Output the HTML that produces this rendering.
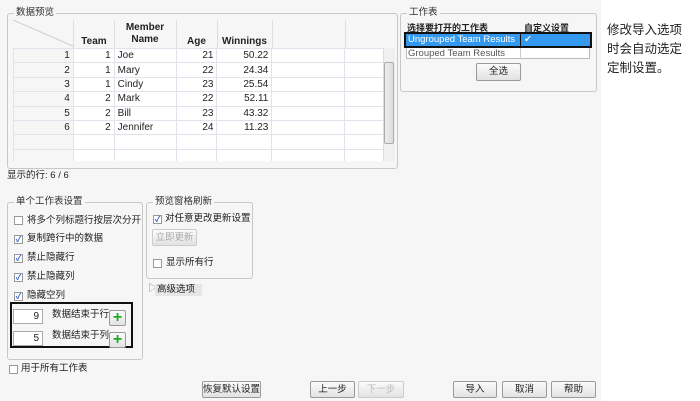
<!DOCTYPE html>
<html><head><meta charset="utf-8"><style>
*{box-sizing:border-box;margin:0;padding:0}
body{width:700px;height:401px;background:#fff;position:relative;overflow:hidden;font-family:"Liberation Sans","Noto Sans CJK SC",sans-serif;font-size:10px;color:#222}
.a{position:absolute}
#dlg{left:0;top:0;width:601px;height:401px;background:#f6f6f6}
.grp{position:absolute;border:1px solid #c8c8c8;border-radius:3px}
.gl{position:absolute;top:-7px;left:6px;background:#f6f6f6;padding:0 2px;font-size:9.5px;color:#333;line-height:12px}
.cb{position:absolute;width:9px;height:9px;border:1px solid #999;background:#fff;font-size:8px;line-height:8px;text-align:center;color:#2a5bd0;font-weight:bold}
.lb{position:absolute;font-size:9.5px;line-height:12px;color:#222}
.btn{position:absolute;border:1px solid #9a9a9a;border-radius:2px;background:linear-gradient(#fbfbfb,#e2e2e2);font-size:9.5px;text-align:center;line-height:16px;color:#222}
table{border-collapse:collapse;font-size:10px}
td{border:1px solid #e2e2ec;height:14.4px;padding:0 3px;line-height:13px;white-space:nowrap}
.r{text-align:right}
</style></head><body>
<div id="dlg" class="a">
<div class="grp" style="left:7px;top:13px;width:391px;height:156px">
 <div class="gl">数据预览</div>
</div>
<svg class="a" style="left:13px;top:20px" width="60" height="28"><line x1="0" y1="0" x2="60" y2="26" stroke="#ccc"/></svg>
<div class="a" style="left:73px;top:20px;width:1px;height:141px;background:#ddd"></div>
<div class="a" style="left:114px;top:20px;width:1px;height:28px;background:#ddd"></div>
<div class="a" style="left:176px;top:20px;width:1px;height:28px;background:#ddd"></div>
<div class="a" style="left:217px;top:20px;width:1px;height:28px;background:#ddd"></div>
<div class="a" style="left:272px;top:20px;width:1px;height:28px;background:#ddd"></div>
<div class="a" style="left:345px;top:20px;width:1px;height:28px;background:#ddd"></div>
<div class="a" style="left:74px;top:22px;width:40px;text-align:center;font-weight:bold;font-size:10px;line-height:12px;padding-top:14px">Team</div>
<div class="a" style="left:114px;top:22px;width:62px;text-align:center;font-weight:bold;font-size:10px;line-height:12px">Member<br>Name</div>
<div class="a" style="left:176px;top:36px;width:41px;text-align:center;font-weight:bold;font-size:10px">Age</div>
<div class="a" style="left:217px;top:36px;width:55px;text-align:center;font-weight:bold;font-size:10px">Winnings</div>
<div class="a" style="left:13px;top:48px;width:370px;height:113px;overflow:hidden;background:#fff">
<table style="width:372px">
<colgroup><col style="width:60px"><col style="width:41px"><col style="width:62px"><col style="width:41px"><col style="width:55px"><col style="width:73px"><col style="width:40px"></colgroup>
<tr><td class="r" style="background:#f6f6f6">1</td><td class="r">1</td><td>Joe</td><td class="r">21</td><td class="r">50.22</td><td></td><td></td></tr>
<tr><td class="r" style="background:#f6f6f6">2</td><td class="r">1</td><td>Mary</td><td class="r">22</td><td class="r">24.34</td><td></td><td></td></tr>
<tr><td class="r" style="background:#f6f6f6">3</td><td class="r">1</td><td>Cindy</td><td class="r">23</td><td class="r">25.54</td><td></td><td></td></tr>
<tr><td class="r" style="background:#f6f6f6">4</td><td class="r">2</td><td>Mark</td><td class="r">22</td><td class="r">52.11</td><td></td><td></td></tr>
<tr><td class="r" style="background:#f6f6f6">5</td><td class="r">2</td><td>Bill</td><td class="r">23</td><td class="r">43.32</td><td></td><td></td></tr>
<tr><td class="r" style="background:#f6f6f6">6</td><td class="r">2</td><td>Jennifer</td><td class="r">24</td><td class="r">11.23</td><td></td><td></td></tr>
<tr><td style="background:#f6f6f6"></td><td></td><td></td><td></td><td></td><td></td><td></td></tr>
<tr><td style="background:#f6f6f6"></td><td></td><td></td><td></td><td></td><td></td><td></td></tr>
</table></div>
<div class="a" style="left:383px;top:48px;width:12px;height:113px;background:#f0f0f0;border-left:1px solid #ddd"></div>
<div class="a" style="left:384px;top:62px;width:10px;height:82px;background:linear-gradient(90deg,#eee,#ddd);border:1px solid #aaa;border-radius:2px"></div>
<div class="lb" style="left:7px;top:170px">显示的行: 6 / 6</div>

<div class="grp" style="left:400px;top:13px;width:197px;height:79px"><div class="gl">工作表</div></div>
<div class="lb" style="left:407px;top:22px;font-weight:bold;text-decoration:underline;font-size:9px">选择要打开的工作表</div>
<div class="lb" style="left:524px;top:22px;font-weight:bold;text-decoration:underline;font-size:9px">自定义设置</div>
<div class="a" style="left:406px;top:47px;width:184px;height:12px;border:1px solid #bbb;background:#fff"></div>
<div class="a" style="left:520px;top:47px;width:1px;height:12px;background:#ccc"></div>
<div class="lb" style="left:408px;top:48px;color:#555">Grouped Team Results</div>
<div class="a" style="left:406px;top:34px;width:184px;height:12px;background:#3399ee;outline:2px solid #111"></div>
<div class="lb" style="left:408px;top:34px;color:#fff">Ungrouped Team Results</div>
<div class="a" style="left:520px;top:34px;width:1px;height:12px;background:#111"></div>
<div class="lb" style="left:524px;top:34px;color:#eef">✔</div>
<div class="btn" style="left:476px;top:63px;width:45px;height:18px">全选</div>

<div class="grp" style="left:7px;top:202px;width:136px;height:158px"><div class="gl">单个工作表设置</div></div>
<div class="cb" style="left:14px;top:216px"></div><div class="lb" style="left:27px;top:215px">将多个列标题行按层次分开</div>
<div class="cb" style="left:14px;top:235px">✓</div><div class="lb" style="left:27px;top:233px">复制跨行中的数据</div>
<div class="cb" style="left:14px;top:254px">✓</div><div class="lb" style="left:27px;top:252px">禁止隐藏行</div>
<div class="cb" style="left:14px;top:273px">✓</div><div class="lb" style="left:27px;top:271px">禁止隐藏列</div>
<div class="cb" style="left:14px;top:292px">✓</div><div class="lb" style="left:27px;top:290px">隐藏空列</div>
<div class="a" style="left:10px;top:302px;width:123px;height:46px;border:2px solid #111"></div>
<div class="a" style="left:13px;top:309px;width:30px;height:15px;border:1px solid #aaa;background:#fff;text-align:right;padding-right:3px;line-height:13px">9</div>
<div class="a" style="left:13px;top:331px;width:30px;height:15px;border:1px solid #aaa;background:#fff;text-align:right;padding-right:3px;line-height:13px">5</div>
<div class="lb" style="left:52px;top:309px">数据结束于行</div>
<div class="lb" style="left:52px;top:330px">数据结束于列</div>
<div class="btn" style="left:109px;top:310px;width:17px;height:16px;color:#2a2;font-size:16px;font-weight:bold;line-height:14px">+</div>
<div class="btn" style="left:109px;top:332px;width:17px;height:16px;color:#2a2;font-size:16px;font-weight:bold;line-height:14px">+</div>

<div class="grp" style="left:146px;top:202px;width:107px;height:77px"><div class="gl">预览窗格刷新</div></div>
<div class="cb" style="left:153px;top:215px">✓</div><div class="lb" style="left:165px;top:213px">对任意更改更新设置</div>
<div class="btn" style="left:152px;top:229px;width:45px;height:17px;color:#aaa;border-color:#ccc">立即更新</div>
<div class="cb" style="left:153px;top:259px"></div><div class="lb" style="left:166px;top:257px">显示所有行</div>
<div class="lb" style="left:148px;top:283px;color:#888">▷</div>
<div class="a" style="left:155px;top:284px;width:47px;height:12px;background:#e6e6e6;font-size:9.5px;line-height:12px;padding-left:2px">高级选项</div>

<div class="cb" style="left:9px;top:365px"></div><div class="lb" style="left:21px;top:363px">用于所有工作表</div>
<div class="btn" style="left:202px;top:381px;width:59px;height:17px">恢复默认设置</div>
<div class="btn" style="left:310px;top:381px;width:45px;height:17px">上一步</div>
<div class="btn" style="left:358px;top:381px;width:46px;height:17px;color:#bbb;border-color:#ccc">下一步</div>
<div class="btn" style="left:453px;top:381px;width:44px;height:17px">导入</div>
<div class="btn" style="left:502px;top:381px;width:45px;height:17px">取消</div>
<div class="btn" style="left:551px;top:381px;width:45px;height:17px">帮助</div>
</div>
<div class="a" style="left:607px;top:21px;font-size:12.5px;line-height:19px;color:#222">修改导入选项<br>时会自动选定<br>定制设置。</div>
</body></html>
